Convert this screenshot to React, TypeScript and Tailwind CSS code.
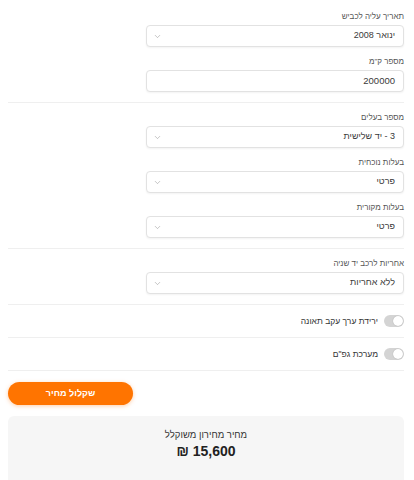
import { ChevronDown } from "lucide-react";

const font = { fontFamily: '"Liberation Sans", "DejaVu Sans", sans-serif' };

const Label = ({ text }: { text: string }) => (
  <div className="h-[12px] mb-[2px] text-[8px] leading-[12px] text-[#555]">{text}</div>
);

const SelectField = ({ label, value }: { label: string; value: string }) => (
  <div className="w-[258px]">
    <Label text={label} />
    <div className="h-[22px] flex items-center justify-between rounded-[4px] border border-[#e2e2e2] bg-white pr-[8px] pl-[6px] shadow-[0_1px_2px_rgba(0,0,0,0.05)]">
      <span className="text-[9px] text-[#3a3a3a]">{value}</span>
      <ChevronDown size={9} strokeWidth={1.5} className="text-[#999]" />
    </div>
  </div>
);

const InputField = ({ label, value }: { label: string; value: string }) => (
  <div className="w-[258px]">
    <Label text={label} />
    <div className="h-[22px] flex items-center rounded-[4px] border border-[#e2e2e2] bg-white pr-[8px] shadow-[0_1px_2px_rgba(0,0,0,0.05)]">
      <span className="text-[9.5px] text-[#3a3a3a]">{value}</span>
    </div>
  </div>
);

const Toggle = ({ label }: { label: string }) => (
  <div className="h-[33px] flex items-center gap-[6px] border-b border-[#efefef]">
    <div className="w-[20px] h-[12px] rounded-full bg-[#d4d4d4] flex items-center px-[1px]">
      <div className="w-[10px] h-[10px] rounded-full bg-white shadow-[0_0_1px_rgba(0,0,0,0.3)]" />
    </div>
    <span className="text-[8.5px] text-[#333]">{label}</span>
  </div>
);

export default function App() {
  return (
    <div dir="rtl" style={font} className="w-[414px] h-[480px] overflow-hidden bg-white pr-[10px] pl-2">
      <div className="pt-[11px] pb-[10px] border-b border-[#efefef] flex flex-col gap-[9px]">
        <SelectField label="תאריך עליה לכביש" value="ינואר 2008" />
        <InputField label='מספר ק"מ' value="200000" />
      </div>

      <div className="pt-[9px] pb-[10px] border-b border-[#efefef] flex flex-col gap-[9px]">
        <SelectField label="מספר בעלים" value="3 - יד שלישית" />
        <SelectField label="בעלות נוכחית" value="פרטי" />
        <SelectField label="בעלות מקורית" value="פרטי" />
      </div>

      <div className="pt-[9px] pb-[10px] border-b border-[#efefef]">
        <SelectField label="אחריות לרכב יד שניה" value="ללא אחריות" />
      </div>

      <Toggle label="ירידת ערך עקב תאונה" />
      <Toggle label='מערכת גפ"ם' />

      <div className="flex justify-end mt-[11px]">
        <button className="w-[125px] h-[23px] rounded-full bg-[#ff7400] text-white text-[9px] font-bold shadow-[0_1px_4px_rgba(255,116,0,0.35)]">
          שקלול מחיר
        </button>
      </div>

      <div className="mt-[11px] h-[80px] rounded-t-[6px] bg-[#f6f6f6] flex flex-col items-center pt-[12px]">
        <div className="text-[9.5px] text-[#333] leading-[14px]">מחיר מחירון משוקלל</div>
        <div className="text-[14px] font-bold text-[#222] leading-[18px]">15,600 ₪</div>
      </div>
    </div>
  );
}
